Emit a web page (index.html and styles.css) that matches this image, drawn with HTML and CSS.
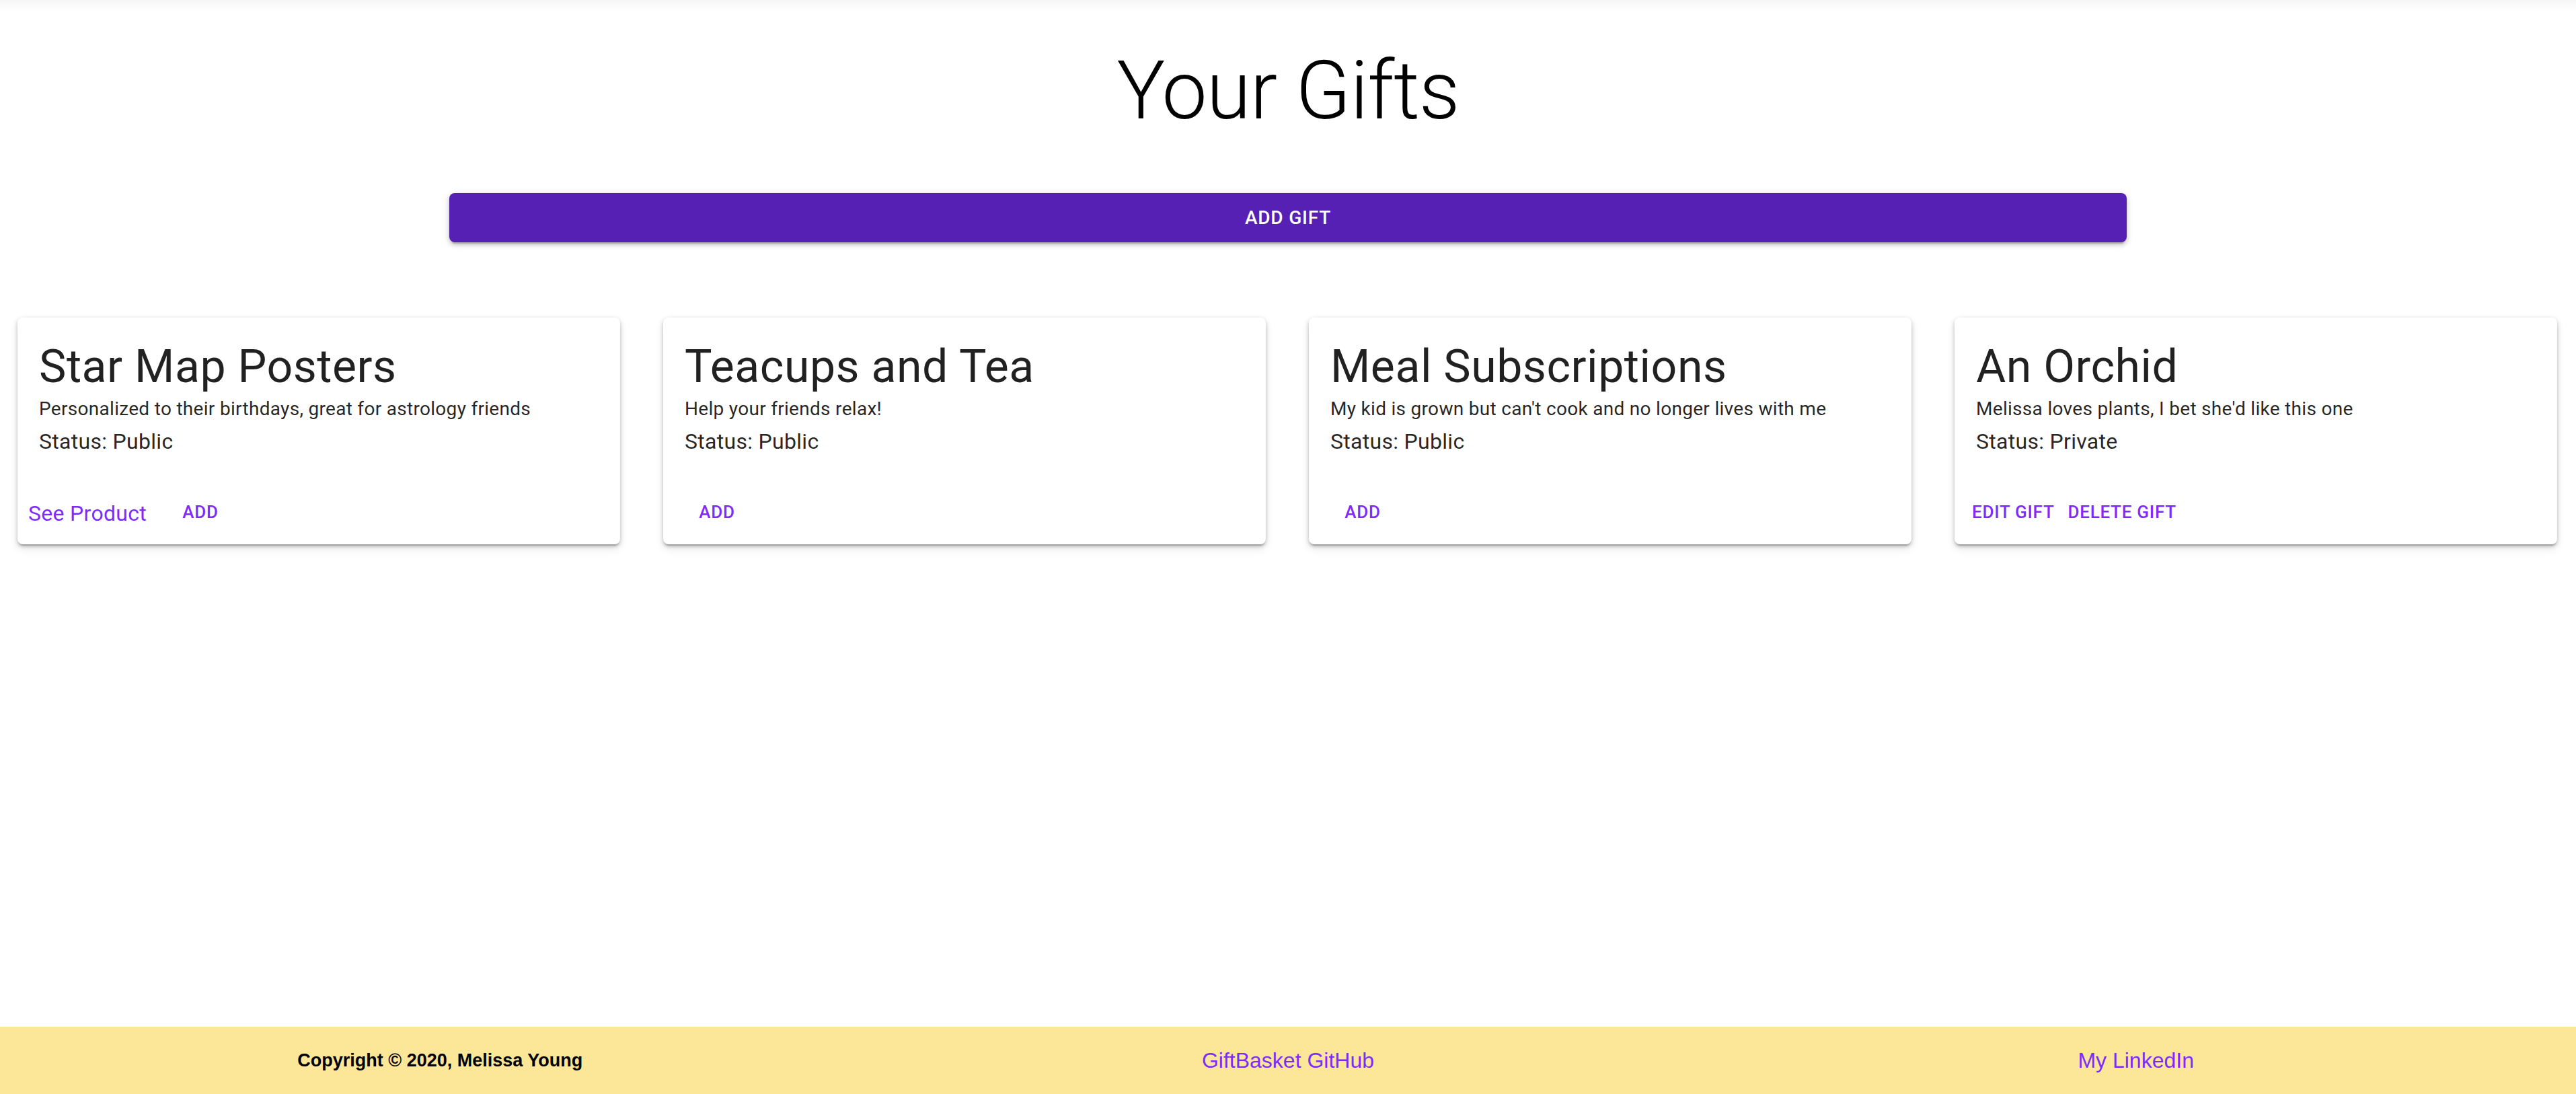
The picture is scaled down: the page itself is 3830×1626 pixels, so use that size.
FILE: index.html
```html
<!DOCTYPE html>
<html lang="en">
<head>
<meta charset="utf-8">
<title>Your Gifts</title>
<link rel="stylesheet" href="styles.css">
</head>
<body>
<div class="page">
  <main class="main">
    <h1 class="title">Your Gifts</h1>
    <button class="add-gift">Add Gift</button>
    <section class="cards">
      <article class="card">
        <div class="card-content">
          <h2 class="card-title">Star Map Posters</h2>
          <p class="card-desc">Personalized to their birthdays, great for astrology friends</p>
          <p class="card-status">Status: Public</p>
        </div>
        <div class="card-actions">
          <a class="product-link" href="#">See Product</a>
          <button class="text-btn spaced">Add</button>
        </div>
      </article>
      <article class="card">
        <div class="card-content">
          <h2 class="card-title">Teacups and Tea</h2>
          <p class="card-desc">Help your friends relax!</p>
          <p class="card-status">Status: Public</p>
        </div>
        <div class="card-actions">
          <button class="text-btn">Add</button>
        </div>
      </article>
      <article class="card">
        <div class="card-content">
          <h2 class="card-title">Meal Subscriptions</h2>
          <p class="card-desc">My kid is grown but can't cook and no longer lives with me</p>
          <p class="card-status">Status: Public</p>
        </div>
        <div class="card-actions">
          <button class="text-btn">Add</button>
        </div>
      </article>
      <article class="card">
        <div class="card-content">
          <h2 class="card-title">An Orchid</h2>
          <p class="card-desc">Melissa loves plants, I bet she'd like this one</p>
          <p class="card-status">Status: Private</p>
        </div>
        <div class="card-actions">
          <div class="btn-group">
            <button class="text-btn">Edit Gift</button>
            <button class="text-btn">Delete Gift</button>
          </div>
        </div>
      </article>
    </section>
  </main>
  <footer class="footer">
    <div class="footer-col copyright">Copyright © 2020, Melissa Young</div>
    <div class="footer-col"><a class="footer-link" href="#">GiftBasket GitHub</a></div>
    <div class="footer-col"><a class="footer-link" href="#">My LinkedIn</a></div>
  </footer>
</div>
</body>
</html>
```
FILE: styles.css
```css
* { box-sizing: border-box; }

html, body {
  margin: 0;
  padding: 0;
}

body {
  font-family: Roboto, "Liberation Sans", Arial, sans-serif;
  color: rgba(0, 0, 0, 0.87);
  background: #fff;
}

.page {
  min-height: 100vh;
  display: flex;
  flex-direction: column;
  background: linear-gradient(to bottom, #f6f6f6 0, #fafafa 8px, #fdfdfd 13px, #fff 16px) no-repeat;
}

.main {
  flex: 1;
  display: flex;
  flex-direction: column;
}

.title {
  margin: 63px 0 80px;
  font-size: 120px;
  font-weight: 300;
  line-height: 1.2;
  letter-spacing: -1px;
  text-align: center;
  color: #000;
}

.add-gift {
  display: block;
  width: 2494px;
  height: 73px;
  margin: 0 auto;
  border: none;
  border-radius: 8px;
  background: #5720b4;
  color: #fff;
  font-family: Roboto, sans-serif;
  font-size: 28px;
  font-weight: 500;
  letter-spacing: 0.8px;
  text-transform: uppercase;
  box-shadow: 0 6px 2px -4px rgba(0,0,0,0.22), 0 4px 6px 0 rgba(0,0,0,0.16), 0 2px 12px 0 rgba(0,0,0,0.12);
}

.cards {
  margin-top: 112px;
  padding: 0 28px 0 26px;
  display: grid;
  grid-template-columns: repeat(4, 1fr);
  column-gap: 64px;
  align-items: start;
}

.card {
  background: #fff;
  border-radius: 8px;
  display: flex;
  flex-direction: column;
  box-shadow: 0 4px 2px -2px rgba(0,0,0,0.2), 0 3px 5px 0 rgba(0,0,0,0.15), 0 2px 8px 0 rgba(0,0,0,0.12), 0 8px 14px rgba(0,0,0,0.07);
}

.card-content {
  padding: 32px 32px 35px;
}

.card-title {
  margin: 0;
  font-size: 68px;
  font-weight: 400;
  line-height: 1.235;
  letter-spacing: 0.5px;
}

.card-desc {
  margin: 0;
  font-size: 28px;
  line-height: 1.43;
  letter-spacing: 0.3px;
}

.card-status {
  margin: 4px 0 0;
  font-size: 32px;
  line-height: 1.5;
  letter-spacing: 0.3px;
}

.card-actions {
  padding: 16px;
  display: flex;
  align-items: center;
}

.product-link {
  color: #7c2bff;
  text-decoration: none;
  font-size: 32px;
  line-height: 1.5;
  letter-spacing: 0.3px;
  margin-top: 2px;
}

.btn-group {
  display: flex;
}

.text-btn {
  min-width: 128px;
  padding: 8px 10px;
  border: none;
  background: transparent;
  color: #7c2bff;
  font-family: Roboto, sans-serif;
  font-size: 26px;
  font-weight: 500;
  line-height: 1.75;
  letter-spacing: 0.74px;
  text-transform: uppercase;
  border-radius: 8px;
}

.text-btn.spaced {
  margin-left: 16px;
}

.footer {
  height: 100px;
  padding: 0 24px;
  background: #fce799;
  display: grid;
  grid-template-columns: repeat(3, 1fr);
  align-items: center;
  text-align: center;
}

.copyright {
  font-family: "Liberation Sans", Arial, sans-serif;
  font-weight: 700;
  font-size: 27px;
  color: #000;
}

.footer-link {
  font-family: "Liberation Sans", Arial, sans-serif;
  font-size: 32px;
  color: #7c2bff;
  text-decoration: none;
}
```
